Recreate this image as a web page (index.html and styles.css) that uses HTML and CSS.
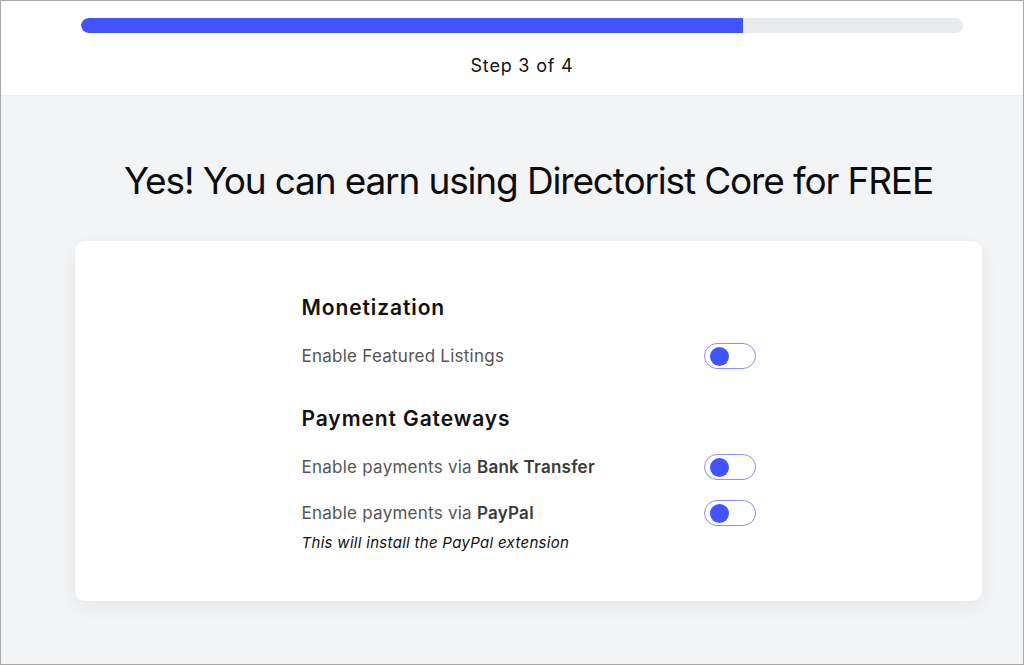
FILE: index.html
```html
<!DOCTYPE html>
<html>
<head>
<meta charset="utf-8">
<link rel="stylesheet" href="styles.css">
</head>
<body>
<div class="frame">
  <header class="top">
    <div class="progress"><div class="progress-fill" style="width:75%"></div></div>
    <div class="step">Step 3 of 4</div>
  </header>
  <main class="main">
    <h1 class="title">Yes! You can earn using Directorist Core for FREE</h1>
    <section class="card">
      <div class="card-body">
        <h2 class="section-title">Monetization</h2>
        <div class="row row-first">
          <span class="label">Enable Featured Listings</span>
          <span class="toggle"><span class="knob"></span></span>
        </div>
        <h2 class="section-title second">Payment Gateways</h2>
        <div class="row row-first">
          <span class="label">Enable payments via <b>Bank Transfer</b></span>
          <span class="toggle"><span class="knob"></span></span>
        </div>
        <div class="row">
          <span class="label">Enable payments via <b>PayPal</b></span>
          <span class="toggle"><span class="knob"></span></span>
        </div>
        <p class="note">This will install the PayPal extension</p>
      </div>
    </section>
  </main>
</div>
</body>
</html>
```
FILE: styles.css
```css
html, body {
  margin: 0;
  padding: 0;
}
body {
  font-family: Inter, "Noto Sans", sans-serif;
  color: #111;
}
.frame {
  width: 1024px;
  height: 665px;
  box-sizing: border-box;
  border: 1px solid #a8a8a8;
  background: #f3f4f6;
  overflow: hidden;
}
.top {
  background: #fff;
  height: 94px;
  box-sizing: border-box;
  padding: 17px 60px 0 80px;
  box-shadow: 0 1px 2px rgba(0,0,0,0.04);
}
.progress {
  height: 15px;
  border-radius: 8px;
  background: #e9eaee;
  overflow: hidden;
}
.progress-fill {
  height: 100%;
  background: #4353ff;
  border-radius: 8px 0 0 8px;
}
.step {
  text-align: center;
  font-size: 18px;
  line-height: 24px;
  margin-top: 21px;
  letter-spacing: 0.8px;
  color: #111;
}
.main {
  padding: 0 41px 0 74px;
}
.title {
  margin: 62px 0 0;
  text-align: center;
  font-size: 37px;
  line-height: 48px;
  font-weight: 400;
  color: #0c0c0c;
  letter-spacing: -1.15px;
}
.card {
  margin-top: 36px;
  background: #fff;
  border-radius: 10px;
  box-shadow: 0 6px 20px rgba(0,0,0,0.06);
  padding: 53px 0 49px;
}
.card-body {
  width: 454px;
  margin: 0 auto;
}
.section-title {
  margin: 0;
  font-size: 21px;
  line-height: 28px;
  font-weight: 600;
  letter-spacing: 0.9px;
  color: #111;
}
.section-title.second {
  margin-top: 36px;
}
.row {
  display: flex;
  justify-content: space-between;
  align-items: center;
  margin-top: 20px;
}
.row-first {
  margin-top: 21px;
}
.label {
  font-size: 17px;
  letter-spacing: 0.25px;
  color: #555;
}
.label b {
  font-weight: 600;
  color: #3a3a3a;
}
.toggle {
  width: 52px;
  height: 26px;
  box-sizing: border-box;
  border: 1px solid #8b90fb;
  border-radius: 13px;
  display: flex;
  align-items: center;
  padding-left: 5px;
}
.knob {
  width: 19px;
  height: 19px;
  border-radius: 50%;
  background: #4353ff;
}
.note {
  margin: 8px 0 0;
  font-size: 15px;
  line-height: 18px;
  font-style: italic;
  letter-spacing: 0.3px;
  color: #111;
}
```
